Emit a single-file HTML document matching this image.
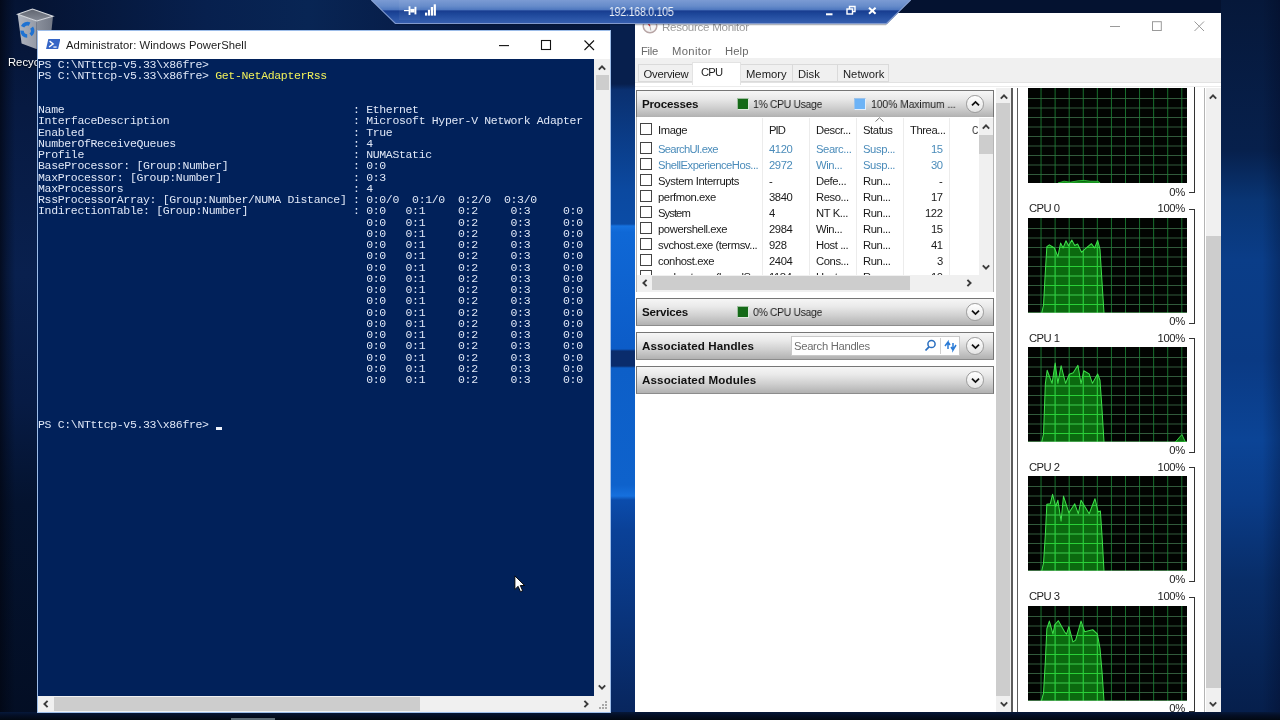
<!DOCTYPE html>
<html>
<head>
<meta charset="utf-8">
<title>Desktop</title>
<style>
*{box-sizing:border-box;margin:0;padding:0}
html,body{width:1280px;height:720px;overflow:hidden}
body{position:relative;background:#04122e;font-family:"Liberation Sans",sans-serif;font-size:12px;color:#000}
.abs{position:absolute}
#pstext,.ttl,#rm .t,#rm b,.row span,.tab,.glab,.pct,#rdptxt,#rbtxt{will-change:transform}
/* ---------- wallpaper ---------- */
#wall{left:0;top:0;width:1280px;height:720px;background:#041230}
#wl{left:0;top:0;width:38px;height:720px;background:linear-gradient(90deg,rgba(2,6,18,.75) 0%,rgba(2,6,18,.35) 18%,rgba(2,6,18,0) 40%),linear-gradient(180deg,#051434 0%,#071a42 15%,#09204e 38%,#071b44 56%,#04132f 70%,#030e24 100%)}
#wt{left:38px;top:0;width:600px;height:30px;background:linear-gradient(90deg,#051434 0%,#07204e 28%,#082554 45%,#071e4a 60%,#06183e 75%,#06173a 100%)}
#wm{left:610px;top:13px;width:26px;height:700px;background:linear-gradient(180deg,#071f4d 0.00%,#071f4d 10.14%,#0a3070 11.00%,#0b49a0 25.29%,#0b4ca6 30.14%,#1672e0 30.43%,#0f68d6 31.29%,#0c5cc8 48.00%,#0a2c6c 48.29%,#0a2c6c 50.43%,#0d5fc8 50.71%,#0e62cc 67.43%,#1670de 69.00%,#0b4cac 69.57%,#0a4198 73.86%,#08265e 99.86%)}
#wr{left:1221px;top:0;width:59px;height:720px;background:linear-gradient(90deg,rgba(0,0,0,0) 0%,rgba(0,0,0,0) 70%,rgba(0,0,20,.25) 100%),linear-gradient(180deg,#06183a 0.00%,#07204c 20.83%,#093574 27.78%,#0a3d88 36.11%,#0a3a84 50.00%,#0b4496 61.11%,#0a3c88 69.44%,#082d68 80.56%,#061e4a 100.00%)}
#wb{left:0;top:712px;width:1280px;height:8px;background:linear-gradient(180deg,#06183a 0%,#040f26 40%,#020812 100%)}
/* ---------- powershell ---------- */
#ps{left:37px;top:30px;width:574px;height:683px;background:#fff;border:1px solid #9dbde9}
#pstitle{left:0;top:0;width:572px;height:28px;background:#fff}
#pscon{left:0;top:28px;width:556px;height:637px;background:#01215a;overflow:hidden}
#pstext{left:0;top:-0.5px;font-family:"Liberation Mono",monospace;font-size:11.5px;letter-spacing:-0.3385px;line-height:11.25px;color:#dfe7f7;white-space:pre}
.y{color:#f0f05a}

#pstitle .ttl{left:27.6px;top:7.7px;font-size:11.25px;color:#1c1c1c;white-space:nowrap;letter-spacing:0.07px}
.sbv{background:#f0f0f0}
.thumb{background:#cdcdcd}
/* ---------- rdp bar ---------- */
#rdp{left:371px;top:0;width:540px;height:26px}
#rdptxt{left:608.5px;top:5.2px;color:#fff;font-size:12px;letter-spacing:-0.3px;transform:scaleX(.885);transform-origin:0 0;opacity:.92;white-space:nowrap}
/* ---------- recycle ---------- */
#rbtxt{left:7.5px;top:55.5px;color:#fff;font-size:11.25px;white-space:nowrap;text-shadow:0 1px 2px #000}
/* ---------- resmon ---------- */
#rm{left:635px;top:13px;width:586px;height:699px;background:#fff}

#rm .t{position:absolute;white-space:nowrap;font-size:11.25px;line-height:14px;letter-spacing:-0.3px}
#rmtabs{left:0;top:45.3px;width:586px;height:24.7px;background:#f0f0f0;border-bottom:1px solid #e2e2e2}
.tab{position:absolute;top:51px;height:18px;background:#f0f0f0;border:1px solid #dadada;font-size:11.25px;line-height:14px;padding:2px 0 0 5px;color:#1c1c1c;white-space:nowrap}
.tab.sel{top:48.8px;height:22.5px;background:#fff;border-color:#e3e3e3;border-bottom:0;padding:2.4px 0 0 8px;letter-spacing:-0.8px}
.hdr{position:absolute;left:1px;width:358px;height:28px;border:1px solid #767676;border-bottom-color:#8c8c8c;background:linear-gradient(180deg,#f6f6f6 0%,#e9e9e9 30%,#cfcfcf 65%,#b1b1b1 100%)}
.hdr b{position:absolute;left:5px;top:6px;font-size:11.6px;letter-spacing:-0.2px;line-height:14px;font-weight:bold;color:#111;white-space:nowrap}
#rm .hdr .t{top:6px;color:#1c1c1c;letter-spacing:-0.35px;transform:scaleX(.925);transform-origin:0 0}
.sq{position:absolute;top:6.5px;width:12px;height:12.5px;border:1px solid #9fbfa0;border-right-color:#dfe9df;border-bottom-color:#dfe9df}
.circ{position:absolute;left:329.3px;top:4px;width:17.6px;height:17.6px;border-radius:50%;border:1px solid #9b9b9b;background:linear-gradient(180deg,#ffffff,#e4e4e4)}
.cb{position:absolute;left:5px;width:12.3px;height:12.3px;border:1px solid #444;background:#fff}
.row{position:absolute;left:1px;width:341px;height:16px;font-size:11.25px;line-height:14px;color:#1a1a1a;letter-spacing:-0.42px}
.row span{position:absolute;top:1px;white-space:nowrap}
.row.bl{color:#4b8cba}
.c1{left:20.6px}.c2{left:131.8px}.c3{left:178.6px}.c4{left:225.5px}.c5{right:35.3px}
.colsep{position:absolute;top:105px;width:1px;height:160px;background:#ececec}
.glab{font-size:11.25px;letter-spacing:-0.55px;line-height:14px;color:#222;white-space:nowrap}
.pct{font-size:11.25px;letter-spacing:-0.3px;line-height:14px;color:#222;white-space:nowrap;width:30px;text-align:right}
.brk{width:6px;border:1px solid #333;border-left:0}
</style>
</head>
<body>
<div id="wall" class="abs"></div>
<div id="wl" class="abs"></div>
<div id="wt" class="abs"></div>
<div id="wm" class="abs"></div>
<div id="wr" class="abs"></div>
<div id="wb" class="abs"></div>
<div class="abs" style="left:231px;top:717.5px;width:44px;height:3px;background:#5d6b76"></div>

<!-- RECYCLE BIN -->
<svg class="abs" style="left:14px;top:6px" width="44" height="46" viewBox="0 0 44 46">
  <defs>
    <linearGradient id="rbl" x1="0" x2="1"><stop offset="0" stop-color="#c3c7cf"/><stop offset=".5" stop-color="#b4b8c1"/><stop offset="1" stop-color="#a4a9b3"/></linearGradient>
    <linearGradient id="rbr" x1="0" x2="1"><stop offset="0" stop-color="#9a9fa9"/><stop offset="1" stop-color="#7e838e"/></linearGradient>
    <linearGradient id="rbt" x1="0" y1="0" x2="0" y2="1"><stop offset="0" stop-color="#5f646f"/><stop offset="1" stop-color="#868b96"/></linearGradient>
  </defs>
  <polygon points="3.6,8.2 22.7,15 22.3,43 7.6,37.6" fill="url(#rbl)" opacity=".9"/>
  <polygon points="22.7,15 39,10.2 36,38.5 22.3,43" fill="url(#rbr)" opacity=".9"/>
  <polygon points="3.6,8.2 18.5,3 39,10.2 22.7,15" fill="url(#rbt)"/>
  <polygon points="3.6,8.2 18.5,3 39,10.2 22.7,15" fill="none" stroke="#d6d9de" stroke-width="1.1"/>
  <g fill="none" stroke="#1f72d2" stroke-width="3.6" stroke-linecap="butt">
    <path d="M8.6 20.8 A5.2 5.2 0 0 1 15.6 18.2"/>
    <path d="M17.6 21.6 A5.2 5.2 0 0 1 16.6 28.8"/>
    <path d="M13.2 30 A5.2 5.2 0 0 1 8 24.6"/>
  </g>
</svg>
<div id="rbtxt" class="abs">Recyc</div>

<!-- POWERSHELL -->
<div id="ps" class="abs">

  <div id="pstitle" class="abs">
    <svg class="abs" style="left:7.8px;top:8px" width="14.4" height="10.2" viewBox="0 0 16 11" preserveAspectRatio="none">
      <polygon points="2.6,0 16,0 13.4,11 0,11" fill="#3565c6"/>
      <polyline points="4,2.3 8,5.3 3.4,8.6" fill="none" stroke="#fff" stroke-width="1.5"/>
      <line x1="8.2" y1="8.7" x2="11.8" y2="8.7" stroke="#fff" stroke-width="1.3"/>
    </svg>
    <div class="abs ttl">Administrator: Windows PowerShell</div>
    <svg class="abs" style="left:455px;top:3px" width="110" height="22" viewBox="0 0 110 22">
      <line x1="6" y1="11.6" x2="16" y2="11.6" stroke="#111" stroke-width="1.1"/>
      <rect x="48.5" y="6.5" width="9" height="9" fill="none" stroke="#111" stroke-width="1.1"/>
      <path d="M91.5 6.5 L101 16 M101 6.5 L91.5 16" stroke="#111" stroke-width="1.1" fill="none"/>
    </svg>
  </div>
  <div id="pscon" class="abs"><div id="pstext" class="abs">PS C:\NTttcp-v5.33\x86fre&gt;
PS C:\NTttcp-v5.33\x86fre&gt; <span class="y">Get-NetAdapterRss</span>


Name                                            : Ethernet
InterfaceDescription                            : Microsoft Hyper-V Network Adapter
Enabled                                         : True
NumberOfReceiveQueues                           : 4
Profile                                         : NUMAStatic
BaseProcessor: [Group:Number]                   : 0:0
MaxProcessor: [Group:Number]                    : 0:3
MaxProcessors                                   : 4
RssProcessorArray: [Group:Number/NUMA Distance] : 0:0/0  0:1/0  0:2/0  0:3/0
IndirectionTable: [Group:Number]                : 0:0   0:1     0:2     0:3     0:0
                                                  0:0   0:1     0:2     0:3     0:0
                                                  0:0   0:1     0:2     0:3     0:0
                                                  0:0   0:1     0:2     0:3     0:0
                                                  0:0   0:1     0:2     0:3     0:0
                                                  0:0   0:1     0:2     0:3     0:0
                                                  0:0   0:1     0:2     0:3     0:0
                                                  0:0   0:1     0:2     0:3     0:0
                                                  0:0   0:1     0:2     0:3     0:0
                                                  0:0   0:1     0:2     0:3     0:0
                                                  0:0   0:1     0:2     0:3     0:0
                                                  0:0   0:1     0:2     0:3     0:0
                                                  0:0   0:1     0:2     0:3     0:0
                                                  0:0   0:1     0:2     0:3     0:0
                                                  0:0   0:1     0:2     0:3     0:0
                                                  0:0   0:1     0:2     0:3     0:0



PS C:\NTttcp-v5.33\x86fre&gt; </div><div class="abs" style="left:177.5px;top:368.4px;width:6.3px;height:2.4px;background:#eef2fb"></div></div>

  <!-- v scrollbar -->
  <div class="abs sbv" style="left:556px;top:28px;width:16px;height:637px"></div>
  <div class="abs thumb" style="left:557.5px;top:44px;width:13.5px;height:15px"></div>
  <svg class="abs" style="left:559px;top:33px" width="10" height="7" viewBox="0 0 10 7"><polyline points="1.8,5.6 5,2.4 8.2,5.6" fill="none" stroke="#3c3c3c" stroke-width="1.9"/></svg>
  <svg class="abs" style="left:559px;top:653px" width="10" height="7" viewBox="0 0 10 7"><polyline points="1.8,1.4 5,4.6 8.2,1.4" fill="none" stroke="#3c3c3c" stroke-width="1.9"/></svg>
  <!-- h scrollbar -->
  <div class="abs sbv" style="left:0;top:665px;width:572px;height:16px"></div>
  <div class="abs thumb" style="left:16px;top:666px;width:366px;height:14px"></div>
  <svg class="abs" style="left:4px;top:668px" width="7" height="10" viewBox="0 0 7 10"><polyline points="5.6,1.8 2.4,5 5.6,8.2" fill="none" stroke="#3c3c3c" stroke-width="1.9"/></svg>
  <svg class="abs" style="left:545px;top:668px" width="7" height="10" viewBox="0 0 7 10"><polyline points="1.4,1.8 4.6,5 1.4,8.2" fill="none" stroke="#3c3c3c" stroke-width="1.9"/></svg>
  <svg class="abs" style="left:560px;top:669px" width="10" height="10" viewBox="0 0 10 10"><g fill="#a8a8a8"><rect x="7" y="1" width="2" height="2"/><rect x="4" y="4" width="2" height="2"/><rect x="7" y="4" width="2" height="2"/><rect x="1" y="7" width="2" height="2"/><rect x="4" y="7" width="2" height="2"/><rect x="7" y="7" width="2" height="2"/></g></svg>
</div>

<!-- RESOURCE MONITOR -->
<div id="rm" class="abs">
  <!-- title -->
  <svg class="abs" style="left:7px;top:4.5px" width="16" height="16" viewBox="0 0 16 16"><circle cx="8" cy="8" r="6.8" fill="#f6f4f4" stroke="#b7a5a5" stroke-width="1.5"/><line x1="8" y1="8" x2="4.6" y2="3.2" stroke="#d43a3a" stroke-width="1.3"/><line x1="8" y1="8" x2="8.8" y2="12.5" stroke="#aaa" stroke-width=".9"/></svg>
  <div class="t" style="left:26.5px;top:6.5px;color:#9b9b9b;font-size:11.6px;letter-spacing:-0.3px">Resource Monitor</div>
  <svg class="abs" style="left:470px;top:3.3px" width="110" height="22" viewBox="0 0 110 22">
    <line x1="5" y1="10.5" x2="15" y2="10.5" stroke="#9a9a9a" stroke-width="1"/>
    <rect x="47.5" y="5.7" width="8.8" height="8.8" fill="none" stroke="#9a9a9a" stroke-width="1"/>
    <path d="M89.5 5.5 L99 15 M99 5.5 L89.5 15" stroke="#9a9a9a" stroke-width="1" fill="none"/>
  </svg>
  <!-- menu -->
  <div class="t" style="left:6px;top:30.5px;color:#6a6a6a">File</div>
  <div class="t" style="left:36.5px;top:30.5px;color:#6a6a6a;letter-spacing:0.35px">Monitor</div>
  <div class="t" style="left:89.6px;top:30.5px;color:#6a6a6a;letter-spacing:0.1px">Help</div>
  <!-- tabs -->
  <div id="rmtabs" class="abs"></div>
  <div class="abs" style="left:0;top:73px;width:586px;height:1px;background:#ececec"></div>
  <div class="tab" style="left:3px;width:55px;padding-left:4.5px;letter-spacing:-0.25px">Overview</div>
  <div class="tab" style="left:105px;width:53px">Memory</div>
  <div class="tab" style="left:157px;width:46px">Disk</div>
  <div class="tab" style="left:202px;width:52px">Network</div>
  <div class="tab sel" style="left:57px;width:49px">CPU</div>

  <!-- left pane -->
  <div class="hdr" style="top:77px"><b>Processes</b>
    <div class="sq" style="left:99.5px;background:#156a18"></div><div class="t" style="left:116px">1% CPU Usage</div>
    <div class="sq" style="left:217px;background:#6db3f6;border-color:#9cc3ea #e3eefa #e3eefa #9cc3ea"></div><div class="t" style="left:233.5px;letter-spacing:-0.1px">100% Maximum ...</div>
    <div class="circ"><svg style="position:absolute;left:3.3px;top:4px" width="9" height="7" viewBox="0 0 9 7"><polyline points="1,5.4 4.5,1.9 8,5.4" fill="none" stroke="#111" stroke-width="1.8"/></svg></div></div>
  <!-- table -->
  <div class="abs" style="left:1px;top:104px;width:358px;height:175px;border:1px solid #b5b5b5;border-top:0;background:#fff;overflow:hidden"></div>
  <div class="abs" style="left:2px;top:105px;width:342px;height:160px;overflow:hidden">
    <div class="row" style="top:3px;left:0"><div class="cb" style="top:2px;left:3px"></div><span class="c1" style="top:2px">Image</span><span class="c2" style="top:2px;letter-spacing:-0.9px">PID</span><span class="c3" style="top:2px">Descr...</span><span class="c4" style="top:2px">Status</span><span style="left:273px;top:2px">Threa...</span><span style="left:335.3px;top:2px;transform:scaleX(.78);transform-origin:0 0">C</span></div>
  </div>
  <div class="colsep" style="left:127px"></div><div class="colsep" style="left:174px"></div><div class="colsep" style="left:221px"></div><div class="colsep" style="left:268px"></div><div class="colsep" style="left:314px"></div>
  <svg class="abs" style="left:240px;top:104px" width="9" height="5" viewBox="0 0 9 5"><polyline points="0.5,4.5 4.5,0.8 8.5,4.5" fill="none" stroke="#777" stroke-width="1"/></svg>
  <div class="abs" style="left:1px;top:0;width:342px;height:265px;overflow:hidden">
<div class="row bl" style="top:128px"><div class="cb" style="top:1px;left:3px"></div><span class="c1" style="letter-spacing:-0.7px">SearchUI.exe</span><span class="c2">4120</span><span class="c3">Searc...</span><span class="c4">Susp...</span><span class="c5">15</span></div>
<div class="row bl" style="top:144px"><div class="cb" style="top:1px;left:3px"></div><span class="c1" style="letter-spacing:-0.5px">ShellExperienceHos...</span><span class="c2">2972</span><span class="c3">Win...</span><span class="c4">Susp...</span><span class="c5">30</span></div>
<div class="row" style="top:160px"><div class="cb" style="top:1px;left:3px"></div><span class="c1">System Interrupts</span><span class="c2">-</span><span class="c3">Defe...</span><span class="c4">Run...</span><span class="c5">-</span></div>
<div class="row" style="top:176px"><div class="cb" style="top:1px;left:3px"></div><span class="c1">perfmon.exe</span><span class="c2">3840</span><span class="c3">Reso...</span><span class="c4">Run...</span><span class="c5">17</span></div>
<div class="row" style="top:192px"><div class="cb" style="top:1px;left:3px"></div><span class="c1" style="letter-spacing:-0.95px">System</span><span class="c2">4</span><span class="c3">NT K...</span><span class="c4">Run...</span><span class="c5">122</span></div>
<div class="row" style="top:208px"><div class="cb" style="top:1px;left:3px"></div><span class="c1">powershell.exe</span><span class="c2">2984</span><span class="c3">Win...</span><span class="c4">Run...</span><span class="c5">15</span></div>
<div class="row" style="top:224px"><div class="cb" style="top:1px;left:3px"></div><span class="c1">svchost.exe (termsv...</span><span class="c2">928</span><span class="c3">Host ...</span><span class="c4">Run...</span><span class="c5">41</span></div>
<div class="row" style="top:240px"><div class="cb" style="top:1px;left:3px"></div><span class="c1">conhost.exe</span><span class="c2">2404</span><span class="c3">Cons...</span><span class="c4">Run...</span><span class="c5">3</span></div>
<div class="row" style="top:256px"><div class="cb" style="top:1px;left:3px"></div><span class="c1">svchost.exe (LocalS...</span><span class="c2">1184</span><span class="c3">Host ...</span><span class="c4">Run...</span><span class="c5">10</span></div>
  </div>
  <!-- table v scrollbar -->
  <div class="abs sbv" style="left:344px;top:105px;width:14px;height:158px"></div>
  <div class="abs thumb" style="left:344px;top:121.5px;width:14px;height:19px"></div>
  <svg class="abs" style="left:346px;top:110px" width="10" height="7" viewBox="0 0 10 7"><polyline points="1.8,5.6 5,2.4 8.2,5.6" fill="none" stroke="#3c3c3c" stroke-width="1.9"/></svg>
  <svg class="abs" style="left:346px;top:251px" width="10" height="7" viewBox="0 0 10 7"><polyline points="1.8,1.4 5,4.6 8.2,1.4" fill="none" stroke="#3c3c3c" stroke-width="1.9"/></svg>
  <!-- table h scrollbar -->
  <div class="abs sbv" style="left:2px;top:262.4px;width:356px;height:16.6px"></div>
  <div class="abs thumb" style="left:17px;top:263.4px;width:258px;height:14px"></div>
  <svg class="abs" style="left:6px;top:265.4px" width="7" height="10" viewBox="0 0 7 10"><polyline points="5.6,1.8 2.4,5 5.6,8.2" fill="none" stroke="#3c3c3c" stroke-width="1.9"/></svg>
  <svg class="abs" style="left:331px;top:265.4px" width="7" height="10" viewBox="0 0 7 10"><polyline points="1.4,1.8 4.6,5 1.4,8.2" fill="none" stroke="#3c3c3c" stroke-width="1.9"/></svg>

  <div class="hdr" style="top:285px"><b>Services</b>
    <div class="sq" style="left:99.5px;background:#156a18"></div><div class="t" style="left:116px">0% CPU Usage</div>
    <div class="circ"><svg style="position:absolute;left:3.3px;top:5px" width="9" height="7" viewBox="0 0 9 7"><polyline points="1,1.6 4.5,5.1 8,1.6" fill="none" stroke="#111" stroke-width="1.8"/></svg></div></div>
  <div class="hdr" style="top:319px"><b style="letter-spacing:.1px">Associated Handles</b>
    <div class="abs" style="left:154px;top:3px;width:169px;height:20px;background:#fff;border:1px solid #c9c9c9"></div>
    <div class="t" style="left:157px;top:6px;color:#6d6d6d;transform:none;letter-spacing:-0.3px">Search Handles</div>
    <svg class="abs" style="left:284px;top:4px" width="40" height="18" viewBox="0 0 40 18">
      <line x1="19.5" y1="1" x2="19.5" y2="17" stroke="#d0d0d0"/>
      <circle cx="10.5" cy="7" r="3.6" fill="none" stroke="#2a6fc0" stroke-width="1.5"/><line x1="8" y1="9.8" x2="4.5" y2="13.5" stroke="#2a6fc0" stroke-width="1.8"/>
      <path d="M24 9 L27 5 L27 12 M27 5 L29 8" stroke="#2a7bd6" stroke-width="1.5" fill="none"/><path d="M35 8 L32 13 L32 6 M32 13 L30 10" stroke="#2a7bd6" stroke-width="1.5" fill="none"/>
    </svg>
    <div class="circ"><svg style="position:absolute;left:3.3px;top:5px" width="9" height="7" viewBox="0 0 9 7"><polyline points="1,1.6 4.5,5.1 8,1.6" fill="none" stroke="#111" stroke-width="1.8"/></svg></div></div>
  <div class="hdr" style="top:353px"><b style="letter-spacing:.13px">Associated Modules</b>
    <div class="circ"><svg style="position:absolute;left:3.3px;top:5px" width="9" height="7" viewBox="0 0 9 7"><polyline points="1,1.6 4.5,5.1 8,1.6" fill="none" stroke="#111" stroke-width="1.8"/></svg></div></div>

  <!-- left pane scrollbar -->
  <div class="abs" style="left:361px;top:75px;width:15px;height:624px;background:#f0f0f0"></div>
  <div class="abs" style="left:361.3px;top:90.3px;width:14px;height:592.3px;background:#cdcdcd"></div>
  <svg class="abs" style="left:363.5px;top:80px" width="10" height="7" viewBox="0 0 10 7"><polyline points="1.8,5.6 5,2.4 8.2,5.6" fill="none" stroke="#3c3c3c" stroke-width="1.9"/></svg>
  <svg class="abs" style="left:363.5px;top:688px" width="10" height="7" viewBox="0 0 10 7"><polyline points="1.8,1.4 5,4.6 8.2,1.4" fill="none" stroke="#3c3c3c" stroke-width="1.9"/></svg>
  <!-- splitter -->
  <div class="abs" style="left:376.2px;top:75px;width:1.4px;height:624px;background:#5c5c5c"></div>
  <div class="abs" style="left:382px;top:75px;width:1px;height:624px;background:#5c5c5c"></div>

  <!-- right pane graphs -->
<svg class="abs" style="left:393px;top:75.2px" width="159" height="95" viewBox="0 0 158.6 94.4" preserveAspectRatio="none">
<rect width="158.6" height="94.4" fill="#020402"/>
<path d="M0,10.50 H158.6 M0,19.94 H158.6 M0,29.38 H158.6 M0,38.82 H158.6 M0,48.26 H158.6 M0,57.70 H158.6 M0,67.14 H158.6 M0,76.58 H158.6 M0,86.02 H158.6" stroke="#3b6a47" stroke-width="1" fill="none" opacity=".85"/>
<path d="M13.00,0 V94.4 M27.04,0 V94.4 M41.08,0 V94.4 M55.12,0 V94.4 M69.16,0 V94.4 M83.20,0 V94.4 M97.24,0 V94.4 M111.28,0 V94.4 M125.32,0 V94.4 M139.36,0 V94.4 M153.40,0 V94.4" stroke="#1d8236" stroke-width="1" fill="none" opacity=".85"/>
<path d="M30,94.4 L36,92.6 L42,93.6 L50,92.2 L56,91.8 L62,92.6 L70,92.8 L72,94.4 Z" fill="#0b6a0f" stroke="#2fd03a" stroke-width=".8"/>
</svg>
<div class="abs pct" style="left:519.5px;top:172px">0%</div>
<div class="abs brk" style="left:554px;top:74px;height:106px;border-top:0"></div>
<div class="abs glab" style="left:394px;top:188.4px">CPU 0</div>
<div class="abs pct" style="left:520.3px;top:188.4px">100%</div>
<svg class="abs" style="left:393px;top:204.6px" width="159" height="95" viewBox="0 0 158.6 94.4" preserveAspectRatio="none">
<rect width="158.6" height="94.4" fill="#020402"/>
<path d="M13.7,94.4 L15.5,86.3 L17.0,58.3 L18.8,28.5 L21.3,26.7 L26.4,29.8 L29.8,38.4 L32.5,24.9 L35.0,29.8 L37.9,22.6 L40.4,27.6 L43.7,21.8 L46.6,27.3 L49.5,25.8 L53.4,34.1 L56.7,30.9 L63.2,25.5 L66.4,29.8 L69.5,22.2 L71.8,31.2 L73.6,60.1 L75.8,94.4 Z" fill="#0b6a0f"/>
<path d="M0,10.50 H158.6 M0,19.94 H158.6 M0,29.38 H158.6 M0,38.82 H158.6 M0,48.26 H158.6 M0,57.70 H158.6 M0,67.14 H158.6 M0,76.58 H158.6 M0,86.02 H158.6" stroke="#3b6a47" stroke-width="1" fill="none" opacity=".85"/>
<path d="M13.00,0 V94.4 M27.04,0 V94.4 M41.08,0 V94.4 M55.12,0 V94.4 M69.16,0 V94.4 M83.20,0 V94.4 M97.24,0 V94.4 M111.28,0 V94.4 M125.32,0 V94.4 M139.36,0 V94.4 M153.40,0 V94.4" stroke="#1d8236" stroke-width="1" fill="none" opacity=".85"/>
<clipPath id="c0"><path d="M13.7,94.4 L15.5,86.3 L17.0,58.3 L18.8,28.5 L21.3,26.7 L26.4,29.8 L29.8,38.4 L32.5,24.9 L35.0,29.8 L37.9,22.6 L40.4,27.6 L43.7,21.8 L46.6,27.3 L49.5,25.8 L53.4,34.1 L56.7,30.9 L63.2,25.5 L66.4,29.8 L69.5,22.2 L71.8,31.2 L73.6,60.1 L75.8,94.4 Z"/></clipPath>
<path d="M13.00,0 V94.4 M27.04,0 V94.4 M41.08,0 V94.4 M55.12,0 V94.4 M69.16,0 V94.4 M83.20,0 V94.4 M97.24,0 V94.4 M111.28,0 V94.4 M125.32,0 V94.4 M139.36,0 V94.4 M153.40,0 V94.4 M0,10.50 H158.6 M0,19.94 H158.6 M0,29.38 H158.6 M0,38.82 H158.6 M0,48.26 H158.6 M0,57.70 H158.6 M0,67.14 H158.6 M0,76.58 H158.6 M0,86.02 H158.6" stroke="#2ad038" stroke-width="1.1" fill="none" clip-path="url(#c0)"/>
<path d="M13.7,94.4 L15.5,86.3 L17.0,58.3 L18.8,28.5 L21.3,26.7 L26.4,29.8 L29.8,38.4 L32.5,24.9 L35.0,29.8 L37.9,22.6 L40.4,27.6 L43.7,21.8 L46.6,27.3 L49.5,25.8 L53.4,34.1 L56.7,30.9 L63.2,25.5 L66.4,29.8 L69.5,22.2 L71.8,31.2 L73.6,60.1 L75.8,94.4" stroke="#3ee04a" stroke-width="1" fill="none" stroke-linejoin="round"/>
<path d="M0,94 H158.6" stroke="#7fd68a" stroke-width=".8" opacity=".7"/>

</svg>
<div class="abs pct" style="left:519.5px;top:301px">0%</div>
<div class="abs brk" style="left:554px;top:196px;height:115px"></div>
<div class="abs glab" style="left:394px;top:317.7px">CPU 1</div>
<div class="abs pct" style="left:520.3px;top:317.7px">100%</div>
<svg class="abs" style="left:393px;top:333.9px" width="159" height="95" viewBox="0 0 158.6 94.4" preserveAspectRatio="none">
<rect width="158.6" height="94.4" fill="#020402"/>
<path d="M13.7,94.4 L15.5,86.3 L17.3,36.6 L19.1,23.1 L24.0,36.1 L27.1,15.9 L29.8,36.1 L33.0,18.6 L37.5,36.1 L41.2,27.1 L45.1,25.5 L49.8,18.2 L52.9,36.6 L55.6,23.6 L61.0,26.7 L64.3,36.1 L69.5,26.7 L71.8,33.0 L73.6,58.3 L75.8,94.4 Z" fill="#0b6a0f"/>
<path d="M0,10.50 H158.6 M0,19.94 H158.6 M0,29.38 H158.6 M0,38.82 H158.6 M0,48.26 H158.6 M0,57.70 H158.6 M0,67.14 H158.6 M0,76.58 H158.6 M0,86.02 H158.6" stroke="#3b6a47" stroke-width="1" fill="none" opacity=".85"/>
<path d="M13.00,0 V94.4 M27.04,0 V94.4 M41.08,0 V94.4 M55.12,0 V94.4 M69.16,0 V94.4 M83.20,0 V94.4 M97.24,0 V94.4 M111.28,0 V94.4 M125.32,0 V94.4 M139.36,0 V94.4 M153.40,0 V94.4" stroke="#1d8236" stroke-width="1" fill="none" opacity=".85"/>
<clipPath id="c1"><path d="M13.7,94.4 L15.5,86.3 L17.3,36.6 L19.1,23.1 L24.0,36.1 L27.1,15.9 L29.8,36.1 L33.0,18.6 L37.5,36.1 L41.2,27.1 L45.1,25.5 L49.8,18.2 L52.9,36.6 L55.6,23.6 L61.0,26.7 L64.3,36.1 L69.5,26.7 L71.8,33.0 L73.6,58.3 L75.8,94.4 Z"/></clipPath>
<path d="M13.00,0 V94.4 M27.04,0 V94.4 M41.08,0 V94.4 M55.12,0 V94.4 M69.16,0 V94.4 M83.20,0 V94.4 M97.24,0 V94.4 M111.28,0 V94.4 M125.32,0 V94.4 M139.36,0 V94.4 M153.40,0 V94.4 M0,10.50 H158.6 M0,19.94 H158.6 M0,29.38 H158.6 M0,38.82 H158.6 M0,48.26 H158.6 M0,57.70 H158.6 M0,67.14 H158.6 M0,76.58 H158.6 M0,86.02 H158.6" stroke="#2ad038" stroke-width="1.1" fill="none" clip-path="url(#c1)"/>
<path d="M13.7,94.4 L15.5,86.3 L17.3,36.6 L19.1,23.1 L24.0,36.1 L27.1,15.9 L29.8,36.1 L33.0,18.6 L37.5,36.1 L41.2,27.1 L45.1,25.5 L49.8,18.2 L52.9,36.6 L55.6,23.6 L61.0,26.7 L64.3,36.1 L69.5,26.7 L71.8,33.0 L73.6,58.3 L75.8,94.4" stroke="#3ee04a" stroke-width="1" fill="none" stroke-linejoin="round"/>
<path d="M0,94 H158.6" stroke="#7fd68a" stroke-width=".8" opacity=".7"/>
<path d="M147,94.4 L153.5,87 L157,94.4 Z" fill="#0b6a0f" stroke="#3ee04a" stroke-width=".9"/>
</svg>
<div class="abs pct" style="left:519.5px;top:430px">0%</div>
<div class="abs brk" style="left:554px;top:325px;height:115px"></div>
<div class="abs glab" style="left:394px;top:447.0px">CPU 2</div>
<div class="abs pct" style="left:520.3px;top:447.0px">100%</div>
<svg class="abs" style="left:393px;top:463.20000000000005px" width="159" height="95" viewBox="0 0 158.6 94.4" preserveAspectRatio="none">
<rect width="158.6" height="94.4" fill="#020402"/>
<path d="M13.7,94.4 L15.5,86.3 L17.3,58.3 L18.8,28.0 L22.2,27.6 L24.5,18.2 L27.6,30.3 L29.8,24.0 L33.0,44.8 L35.4,20.0 L40.8,36.6 L46.6,27.6 L50.2,37.5 L52.9,24.0 L61.0,37.5 L66.8,22.6 L70.0,35.7 L72.2,34.8 L74.0,61.9 L75.8,94.4 Z" fill="#0b6a0f"/>
<path d="M0,10.50 H158.6 M0,19.94 H158.6 M0,29.38 H158.6 M0,38.82 H158.6 M0,48.26 H158.6 M0,57.70 H158.6 M0,67.14 H158.6 M0,76.58 H158.6 M0,86.02 H158.6" stroke="#3b6a47" stroke-width="1" fill="none" opacity=".85"/>
<path d="M13.00,0 V94.4 M27.04,0 V94.4 M41.08,0 V94.4 M55.12,0 V94.4 M69.16,0 V94.4 M83.20,0 V94.4 M97.24,0 V94.4 M111.28,0 V94.4 M125.32,0 V94.4 M139.36,0 V94.4 M153.40,0 V94.4" stroke="#1d8236" stroke-width="1" fill="none" opacity=".85"/>
<clipPath id="c2"><path d="M13.7,94.4 L15.5,86.3 L17.3,58.3 L18.8,28.0 L22.2,27.6 L24.5,18.2 L27.6,30.3 L29.8,24.0 L33.0,44.8 L35.4,20.0 L40.8,36.6 L46.6,27.6 L50.2,37.5 L52.9,24.0 L61.0,37.5 L66.8,22.6 L70.0,35.7 L72.2,34.8 L74.0,61.9 L75.8,94.4 Z"/></clipPath>
<path d="M13.00,0 V94.4 M27.04,0 V94.4 M41.08,0 V94.4 M55.12,0 V94.4 M69.16,0 V94.4 M83.20,0 V94.4 M97.24,0 V94.4 M111.28,0 V94.4 M125.32,0 V94.4 M139.36,0 V94.4 M153.40,0 V94.4 M0,10.50 H158.6 M0,19.94 H158.6 M0,29.38 H158.6 M0,38.82 H158.6 M0,48.26 H158.6 M0,57.70 H158.6 M0,67.14 H158.6 M0,76.58 H158.6 M0,86.02 H158.6" stroke="#2ad038" stroke-width="1.1" fill="none" clip-path="url(#c2)"/>
<path d="M13.7,94.4 L15.5,86.3 L17.3,58.3 L18.8,28.0 L22.2,27.6 L24.5,18.2 L27.6,30.3 L29.8,24.0 L33.0,44.8 L35.4,20.0 L40.8,36.6 L46.6,27.6 L50.2,37.5 L52.9,24.0 L61.0,37.5 L66.8,22.6 L70.0,35.7 L72.2,34.8 L74.0,61.9 L75.8,94.4" stroke="#3ee04a" stroke-width="1" fill="none" stroke-linejoin="round"/>
<path d="M0,94 H158.6" stroke="#7fd68a" stroke-width=".8" opacity=".7"/>

</svg>
<div class="abs pct" style="left:519.5px;top:559px">0%</div>
<div class="abs brk" style="left:554px;top:454px;height:115px"></div>
<div class="abs glab" style="left:394px;top:576.3px">CPU 3</div>
<div class="abs pct" style="left:520.3px;top:576.3px">100%</div>
<svg class="abs" style="left:393px;top:592.5px" width="159" height="95" viewBox="0 0 158.6 94.4" preserveAspectRatio="none">
<rect width="158.6" height="94.4" fill="#020402"/>
<path d="M13.4,94.4 L15.5,86.3 L17.3,54.7 L18.8,22.6 L21.3,15.0 L24.9,28.0 L26.7,18.6 L30.3,14.6 L36.6,25.8 L38.4,28.0 L40.8,20.4 L44.8,35.7 L47.5,33.9 L52.9,15.0 L56.5,25.5 L64.6,23.6 L69.1,27.6 L71.8,42.1 L74.0,67.3 L75.8,94.4 Z" fill="#0b6a0f"/>
<path d="M0,10.50 H158.6 M0,19.94 H158.6 M0,29.38 H158.6 M0,38.82 H158.6 M0,48.26 H158.6 M0,57.70 H158.6 M0,67.14 H158.6 M0,76.58 H158.6 M0,86.02 H158.6" stroke="#3b6a47" stroke-width="1" fill="none" opacity=".85"/>
<path d="M13.00,0 V94.4 M27.04,0 V94.4 M41.08,0 V94.4 M55.12,0 V94.4 M69.16,0 V94.4 M83.20,0 V94.4 M97.24,0 V94.4 M111.28,0 V94.4 M125.32,0 V94.4 M139.36,0 V94.4 M153.40,0 V94.4" stroke="#1d8236" stroke-width="1" fill="none" opacity=".85"/>
<clipPath id="c3"><path d="M13.4,94.4 L15.5,86.3 L17.3,54.7 L18.8,22.6 L21.3,15.0 L24.9,28.0 L26.7,18.6 L30.3,14.6 L36.6,25.8 L38.4,28.0 L40.8,20.4 L44.8,35.7 L47.5,33.9 L52.9,15.0 L56.5,25.5 L64.6,23.6 L69.1,27.6 L71.8,42.1 L74.0,67.3 L75.8,94.4 Z"/></clipPath>
<path d="M13.00,0 V94.4 M27.04,0 V94.4 M41.08,0 V94.4 M55.12,0 V94.4 M69.16,0 V94.4 M83.20,0 V94.4 M97.24,0 V94.4 M111.28,0 V94.4 M125.32,0 V94.4 M139.36,0 V94.4 M153.40,0 V94.4 M0,10.50 H158.6 M0,19.94 H158.6 M0,29.38 H158.6 M0,38.82 H158.6 M0,48.26 H158.6 M0,57.70 H158.6 M0,67.14 H158.6 M0,76.58 H158.6 M0,86.02 H158.6" stroke="#2ad038" stroke-width="1.1" fill="none" clip-path="url(#c3)"/>
<path d="M13.4,94.4 L15.5,86.3 L17.3,54.7 L18.8,22.6 L21.3,15.0 L24.9,28.0 L26.7,18.6 L30.3,14.6 L36.6,25.8 L38.4,28.0 L40.8,20.4 L44.8,35.7 L47.5,33.9 L52.9,15.0 L56.5,25.5 L64.6,23.6 L69.1,27.6 L71.8,42.1 L74.0,67.3 L75.8,94.4" stroke="#3ee04a" stroke-width="1" fill="none" stroke-linejoin="round"/>
<path d="M0,94 H158.6" stroke="#7fd68a" stroke-width=".8" opacity=".7"/>

</svg>
<div class="abs pct" style="left:519.5px;top:688px">0%</div>
<div class="abs brk" style="left:554px;top:584px;height:115px"></div>
  <div class="abs" style="left:568.5px;top:75px;width:1px;height:624px;background:#b4b4b4"></div>
  <!-- right scrollbar -->
  <div class="abs" style="left:571px;top:75px;width:15px;height:624px;background:#f0f0f0"></div>
  <div class="abs" style="left:571px;top:223px;width:15px;height:452px;background:#cdcdcd"></div>
  <svg class="abs" style="left:573px;top:80px" width="10" height="7" viewBox="0 0 10 7"><polyline points="1.8,5.6 5,2.4 8.2,5.6" fill="none" stroke="#3c3c3c" stroke-width="1.9"/></svg>
  <svg class="abs" style="left:573px;top:688px" width="10" height="7" viewBox="0 0 10 7"><polyline points="1.8,1.4 5,4.6 8.2,1.4" fill="none" stroke="#3c3c3c" stroke-width="1.9"/></svg>
</div>



<!-- CURSOR -->
<svg class="abs" style="left:514px;top:575px" width="11.7" height="18" viewBox="0 0 13 20">
  <path d="M1 1 L1 16 L4.6 12.6 L7.2 18.6 L9.6 17.5 L7 11.7 L11.8 11.7 Z" fill="#fff" stroke="#000" stroke-width="1"/>
</svg>

<!-- RDP BAR -->
<svg id="rdp" class="abs" width="540" height="26" viewBox="0 0 540 26">
  <defs>
    <linearGradient id="rg" x1="0" y1="0" x2="0" y2="1">
      <stop offset="0" stop-color="#7b9bd3"/><stop offset=".25" stop-color="#678cca"/><stop offset=".4" stop-color="#5079c0"/>
      <stop offset=".46" stop-color="#183c8f"/><stop offset=".58" stop-color="#1d4699"/><stop offset=".8" stop-color="#2b55a7"/><stop offset="1" stop-color="#3860b0"/>
    </linearGradient>
  </defs>
  <polygon points="0,0 540,0 515,25.2 25,25.2" fill="#06122c" opacity=".32"/>
  <polygon points="0,0 540,0 515.8,23.9 24.2,23.9" fill="url(#rg)"/>
  <polyline points="0.3,0 24.4,23.5 515.6,23.5 539.7,0" fill="none" stroke="#8da3d2" stroke-width="1.1" opacity=".85"/>
  <rect x="28" y="0" width="21" height="20" fill="#fff" opacity=".05"/>
  <!-- pin -->
  <g fill="#fff"><rect x="33" y="10" width="5" height="1.2"/><rect x="37.6" y="6.3" width="1.8" height="8.7"/><rect x="39.3" y="8.9" width="4.3" height="3.6"/><rect x="43.5" y="6.8" width="1.9" height="7.6"/></g>
  <!-- signal -->
  <g fill="#fff"><rect x="54" y="12.6" width="2.2" height="3"/><rect x="56.9" y="9.8" width="2.2" height="5.8"/><rect x="59.8" y="7" width="2.2" height="8.6"/><rect x="62.7" y="4.3" width="2.2" height="11.3"/></g>
  <!-- controls -->
  <rect x="455" y="13.3" width="6.5" height="2" fill="#fff"/>
  <g stroke="#fff" stroke-width="1.4" fill="none"><rect x="476" y="9" width="5.5" height="5"/><polyline points="478.5,9 478.5,6.5 484,6.5 484,11.5 481.5,11.5"/></g>
  <path d="M498 7.8 L504.6 13.8 M504.6 7.8 L498 13.8" stroke="#fff" stroke-width="2" fill="none"/>
</svg>
<div id="rdptxt" class="abs">192.168.0.105</div>
</body>
</html>
